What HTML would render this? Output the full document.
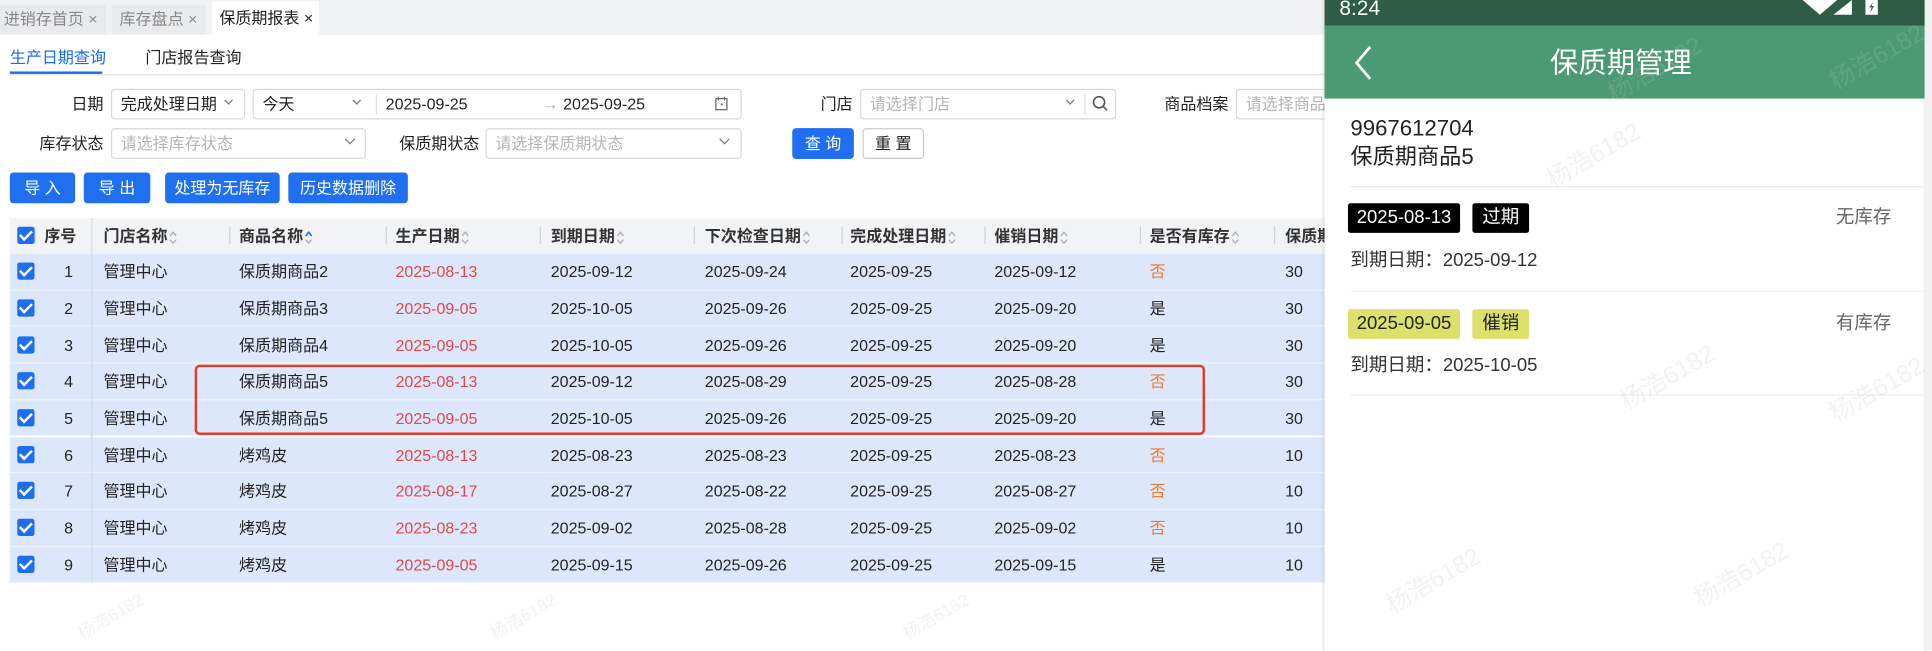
<!DOCTYPE html>
<html><head><meta charset="utf-8">
<style>
*{margin:0;padding:0;box-sizing:border-box}
html,body{width:1932px;height:651px;overflow:hidden;background:#fff}
#s{position:absolute;left:0;top:0;width:1568px;height:528px;transform:scale(1.23214);transform-origin:0 0;font-family:"Liberation Sans","Noto Sans CJK SC",sans-serif;font-size:13px;color:#222}
.a{position:absolute;white-space:nowrap;line-height:16px}
.box{position:absolute;border:1px solid #d9d9d9;border-radius:3px;background:#fff}
.ph{color:#b5b5b5}
.chev{position:absolute;width:7px;height:7px;border-right:1.3px solid #777;border-bottom:1.3px solid #777;transform:rotate(45deg)}
.btn{position:absolute;background:#1f6ff0;color:#fff;border-radius:3px;text-align:center;line-height:25px;height:25px}
.cb{position:absolute;width:14px;height:14px;background:#1e6ff0;border-radius:2px}
.cb:after{content:"";position:absolute;left:4px;top:1px;width:4px;height:8px;border-right:2px solid #fff;border-bottom:2px solid #fff;transform:rotate(45deg)}
.row{position:absolute;left:8px;width:1067px;height:29.7px;background:#dce7fb;border-bottom:1px solid #eef3fd}
.hs{position:absolute;top:184px;width:1px;height:14px;background:#d0d0d0}
.srt{display:inline-block;vertical-align:middle;margin-left:1px}
.red{color:#e0474a}.org{color:#f07c2a}
.wm{position:absolute;color:rgba(0,0,0,0.05);font-size:20px;transform:rotate(-30deg);white-space:nowrap}
</style></head><body><div id="s">
<div class="a" style="left:0;top:0;width:1075px;height:28px;background:#f0f1f3"></div>
<div class="a" style="left:0;top:4px;width:86px;height:24px;background:#e9eaec;color:#888;line-height:24px;padding-left:3px">进销存首页 ×</div>
<div class="a" style="left:91px;top:4px;width:76px;height:24px;background:#e9eaec;color:#888;line-height:24px;padding-left:6px">库存盘点 ×</div>
<div class="a" style="left:172px;top:1px;width:87px;height:27px;background:#fff;color:#222;line-height:27px;padding-left:6px">保质期报表 ×</div>
<div class="a" style="left:8px;top:39px;color:#1a6ee8">生产日期查询</div>
<div class="a" style="left:118px;top:39px;color:#222">门店报告查询</div>
<div class="a" style="left:8px;top:58px;width:75px;height:2px;background:#1a6ee8"></div>
<div class="a" style="left:8px;top:60px;width:1067px;height:1px;background:#e4e4e4"></div>
<div class="a" style="left:58px;top:77px">日期</div>
<div class="box" style="left:90px;top:72px;width:109px;height:25px"></div>
<div class="a" style="left:98px;top:77px">完成处理日期</div><div class="chev" style="left:183px;top:79px;width:5px;height:5px"></div>
<div class="box" style="left:205px;top:72px;width:397px;height:25px"></div>
<div class="a" style="left:213px;top:77px">今天</div><div class="chev" style="left:287px;top:79px;width:5px;height:5px"></div>
<div class="a" style="left:305px;top:77px;width:1px;height:16px;background:#ddd"></div>
<div class="a" style="left:313px;top:77px">2025-09-25</div>
<div class="a" style="left:440px;top:77px;color:#aaa">→</div>
<div class="a" style="left:457px;top:77px">2025-09-25</div>
<svg class="a" style="left:580px;top:78px" width="11" height="12" viewBox="0 0 11 12"><rect x="1" y="2" width="9" height="9" fill="none" stroke="#666"/><path d="M3 0.5v3M8 0.5v3" stroke="#666"/><rect x="5" y="6" width="1.5" height="1.5" fill="#666"/></svg>
<div class="a" style="left:666px;top:77px">门店</div>
<div class="box" style="left:698px;top:72px;width:208px;height:25px"></div>
<div class="a ph" style="left:706px;top:77px">请选择门店</div><div class="chev" style="left:866px;top:79px;width:5px;height:5px"></div>
<div class="a" style="left:880px;top:77px;width:1px;height:16px;background:#ddd"></div>
<svg class="a" style="left:886px;top:77px" width="14" height="14" viewBox="0 0 14 14"><circle cx="6" cy="6" r="4.5" fill="none" stroke="#555" stroke-width="1.3"/><path d="M9.5 9.5l3 3" stroke="#555" stroke-width="1.3"/></svg>
<div class="a" style="left:945px;top:77px">商品档案</div>
<div class="box" style="left:1003px;top:72px;width:90px;height:25px"></div>
<div class="a ph" style="left:1011px;top:77px">请选择商品</div>
<div class="a" style="left:32px;top:109px">库存状态</div>
<div class="box" style="left:90px;top:104px;width:207px;height:25px"></div>
<div class="a ph" style="left:98px;top:109px">请选择库存状态</div><div class="chev" style="left:281px;top:110px;width:6px;height:6px"></div>
<div class="a" style="left:324px;top:109px">保质期状态</div>
<div class="box" style="left:394px;top:104px;width:208px;height:25px"></div>
<div class="a ph" style="left:402px;top:109px">请选择保质期状态</div><div class="chev" style="left:585px;top:110px;width:6px;height:6px"></div>
<div class="btn" style="left:643px;top:104px;width:50px">查 询</div>
<div class="btn" style="left:700px;top:104px;width:50px;background:#fff;color:#222;border:1px solid #ccc;line-height:23px">重 置</div>
<div class="btn" style="left:8px;top:140px;width:53px">导 入</div>
<div class="btn" style="left:68px;top:140px;width:54px">导 出</div>
<div class="btn" style="left:134px;top:140px;width:93px">处理为无库存</div>
<div class="btn" style="left:234px;top:140px;width:97px">历史数据删除</div>
<div class="a" style="left:8px;top:177px;width:1067px;height:29px;background:#f2f3f5"></div>
<div class="cb" style="left:14px;top:184px"></div>
<div class="a" style="left:28px;top:184px;width:1px;height:14px;background:#d0d0d0"></div>
<div class="a" style="left:74px;top:177px;width:1px;height:296px;background:#d8dde8"></div>
<div class="hs" style="left:186px"></div><div class="hs" style="left:313px"></div><div class="hs" style="left:438px"></div><div class="hs" style="left:563px"></div><div class="hs" style="left:683px"></div><div class="hs" style="left:799px"></div><div class="hs" style="left:925px"></div><div class="hs" style="left:1034px"></div>
<div style="font-weight:bold;color:#333">
<div class="a" style="left:36px;top:184px">序号</div>
<div class="a" style="left:84px;top:184px">门店名称<svg class="srt" width="7" height="12"><path d="M1 4.5l2.5-3 2.5 3M1 7.5l2.5 3 2.5-3" fill="none" stroke="#aaa"/></svg></div>
<div class="a" style="left:194px;top:184px">商品名称<svg class="srt" width="7" height="12"><path d="M1 4.5l2.5-3 2.5 3" fill="none" stroke="#1a6ee8" stroke-width="1.3"/><path d="M1 7.5l2.5 3 2.5-3" fill="none" stroke="#aaa"/></svg></div>
<div class="a" style="left:321px;top:184px">生产日期<svg class="srt" width="7" height="12"><path d="M1 4.5l2.5-3 2.5 3M1 7.5l2.5 3 2.5-3" fill="none" stroke="#aaa"/></svg></div>
<div class="a" style="left:447px;top:184px">到期日期<svg class="srt" width="7" height="12"><path d="M1 4.5l2.5-3 2.5 3M1 7.5l2.5 3 2.5-3" fill="none" stroke="#aaa"/></svg></div>
<div class="a" style="left:572px;top:184px">下次检查日期<svg class="srt" width="7" height="12"><path d="M1 4.5l2.5-3 2.5 3M1 7.5l2.5 3 2.5-3" fill="none" stroke="#aaa"/></svg></div>
<div class="a" style="left:690px;top:184px">完成处理日期<svg class="srt" width="7" height="12"><path d="M1 4.5l2.5-3 2.5 3M1 7.5l2.5 3 2.5-3" fill="none" stroke="#aaa"/></svg></div>
<div class="a" style="left:807px;top:184px">催销日期<svg class="srt" width="7" height="12"><path d="M1 4.5l2.5-3 2.5 3M1 7.5l2.5 3 2.5-3" fill="none" stroke="#aaa"/></svg></div>
<div class="a" style="left:933px;top:184px">是否有库存<svg class="srt" width="7" height="12"><path d="M1 4.5l2.5-3 2.5 3M1 7.5l2.5 3 2.5-3" fill="none" stroke="#aaa"/></svg></div>
<div class="a" style="left:1043px;top:184px">保质期</div>
</div>
<div class="row" style="top:206.0px"></div><div class="row" style="top:235.7px"></div><div class="row" style="top:265.4px"></div><div class="row" style="top:295.1px"></div><div class="row" style="top:324.8px"></div><div class="row" style="top:354.5px"></div><div class="row" style="top:384.2px"></div><div class="row" style="top:413.9px"></div><div class="row" style="top:443.6px"></div>
<div class="a" style="left:74px;top:206px;width:1px;height:267px;background:#cfd8ea"></div>
<div style="position:absolute;left:0;top:0">
<div class="cb" style="left:14px;top:213px"></div><div class="a" style="left:52px;top:213px">1</div><div class="a" style="left:84px;top:213px">管理中心</div><div class="a" style="left:194px;top:213px">保质期商品2</div><div class="a red" style="left:321px;top:213px">2025-08-13</div><div class="a" style="left:447px;top:213px">2025-09-12</div><div class="a" style="left:572px;top:213px">2025-09-24</div><div class="a" style="left:690px;top:213px">2025-09-25</div><div class="a" style="left:807px;top:213px">2025-09-12</div><div class="a org" style="left:933px;top:213px">否</div><div class="a" style="left:1043px;top:213px">30</div>
<div class="cb" style="left:14px;top:243px"></div><div class="a" style="left:52px;top:243px">2</div><div class="a" style="left:84px;top:243px">管理中心</div><div class="a" style="left:194px;top:243px">保质期商品3</div><div class="a red" style="left:321px;top:243px">2025-09-05</div><div class="a" style="left:447px;top:243px">2025-10-05</div><div class="a" style="left:572px;top:243px">2025-09-26</div><div class="a" style="left:690px;top:243px">2025-09-25</div><div class="a" style="left:807px;top:243px">2025-09-20</div><div class="a" style="left:933px;top:243px">是</div><div class="a" style="left:1043px;top:243px">30</div>
<div class="cb" style="left:14px;top:273px"></div><div class="a" style="left:52px;top:273px">3</div><div class="a" style="left:84px;top:273px">管理中心</div><div class="a" style="left:194px;top:273px">保质期商品4</div><div class="a red" style="left:321px;top:273px">2025-09-05</div><div class="a" style="left:447px;top:273px">2025-10-05</div><div class="a" style="left:572px;top:273px">2025-09-26</div><div class="a" style="left:690px;top:273px">2025-09-25</div><div class="a" style="left:807px;top:273px">2025-09-20</div><div class="a" style="left:933px;top:273px">是</div><div class="a" style="left:1043px;top:273px">30</div>
<div class="cb" style="left:14px;top:302px"></div><div class="a" style="left:52px;top:302px">4</div><div class="a" style="left:84px;top:302px">管理中心</div><div class="a" style="left:194px;top:302px">保质期商品5</div><div class="a red" style="left:321px;top:302px">2025-08-13</div><div class="a" style="left:447px;top:302px">2025-09-12</div><div class="a" style="left:572px;top:302px">2025-08-29</div><div class="a" style="left:690px;top:302px">2025-09-25</div><div class="a" style="left:807px;top:302px">2025-08-28</div><div class="a org" style="left:933px;top:302px">否</div><div class="a" style="left:1043px;top:302px">30</div>
<div class="cb" style="left:14px;top:332px"></div><div class="a" style="left:52px;top:332px">5</div><div class="a" style="left:84px;top:332px">管理中心</div><div class="a" style="left:194px;top:332px">保质期商品5</div><div class="a red" style="left:321px;top:332px">2025-09-05</div><div class="a" style="left:447px;top:332px">2025-10-05</div><div class="a" style="left:572px;top:332px">2025-09-26</div><div class="a" style="left:690px;top:332px">2025-09-25</div><div class="a" style="left:807px;top:332px">2025-09-20</div><div class="a" style="left:933px;top:332px">是</div><div class="a" style="left:1043px;top:332px">30</div>
<div class="cb" style="left:14px;top:362px"></div><div class="a" style="left:52px;top:362px">6</div><div class="a" style="left:84px;top:362px">管理中心</div><div class="a" style="left:194px;top:362px">烤鸡皮</div><div class="a red" style="left:321px;top:362px">2025-08-13</div><div class="a" style="left:447px;top:362px">2025-08-23</div><div class="a" style="left:572px;top:362px">2025-08-23</div><div class="a" style="left:690px;top:362px">2025-09-25</div><div class="a" style="left:807px;top:362px">2025-08-23</div><div class="a org" style="left:933px;top:362px">否</div><div class="a" style="left:1043px;top:362px">10</div>
<div class="cb" style="left:14px;top:391px"></div><div class="a" style="left:52px;top:391px">7</div><div class="a" style="left:84px;top:391px">管理中心</div><div class="a" style="left:194px;top:391px">烤鸡皮</div><div class="a red" style="left:321px;top:391px">2025-08-17</div><div class="a" style="left:447px;top:391px">2025-08-27</div><div class="a" style="left:572px;top:391px">2025-08-22</div><div class="a" style="left:690px;top:391px">2025-09-25</div><div class="a" style="left:807px;top:391px">2025-08-27</div><div class="a org" style="left:933px;top:391px">否</div><div class="a" style="left:1043px;top:391px">10</div>
<div class="cb" style="left:14px;top:421px"></div><div class="a" style="left:52px;top:421px">8</div><div class="a" style="left:84px;top:421px">管理中心</div><div class="a" style="left:194px;top:421px">烤鸡皮</div><div class="a red" style="left:321px;top:421px">2025-08-23</div><div class="a" style="left:447px;top:421px">2025-09-02</div><div class="a" style="left:572px;top:421px">2025-08-28</div><div class="a" style="left:690px;top:421px">2025-09-25</div><div class="a" style="left:807px;top:421px">2025-09-02</div><div class="a org" style="left:933px;top:421px">否</div><div class="a" style="left:1043px;top:421px">10</div>
<div class="cb" style="left:14px;top:451px"></div><div class="a" style="left:52px;top:451px">9</div><div class="a" style="left:84px;top:451px">管理中心</div><div class="a" style="left:194px;top:451px">烤鸡皮</div><div class="a red" style="left:321px;top:451px">2025-09-05</div><div class="a" style="left:447px;top:451px">2025-09-15</div><div class="a" style="left:572px;top:451px">2025-09-26</div><div class="a" style="left:690px;top:451px">2025-09-25</div><div class="a" style="left:807px;top:451px">2025-09-15</div><div class="a" style="left:933px;top:451px">是</div><div class="a" style="left:1043px;top:451px">10</div>
</div>
<div class="a" style="left:158px;top:296px;width:820px;height:57px;border:2.5px solid #e33b26;border-radius:4px"></div>
<div class="wm" style="left:60px;top:490px;font-size:14px">杨浩6182</div>
<div class="wm" style="left:395px;top:490px;font-size:14px">杨浩6182</div>
<div class="wm" style="left:730px;top:490px;font-size:14px">杨浩6182</div>
<div class="a" style="left:1072px;top:0;width:4px;height:528px;background:linear-gradient(90deg,rgba(0,0,0,0),rgba(0,0,0,0.12))"></div>
<div class="a" style="left:1075px;top:0;width:487px;height:528px;background:#fff"></div>
<div class="a" style="left:1561px;top:0;width:7px;height:528px;background:#f2f2f2"></div>
<div class="a" style="left:1075px;top:0;width:487px;height:21px;background:#2e5c45"></div>
<div class="a" style="left:1087px;top:-2px;color:#fff;font-size:17px;line-height:18px">8:24</div>
<svg class="a" style="left:1463px;top:0" width="64" height="14"><path d="M0 0h28l-14 12z" fill="#fff"/><path d="M25 12L40 0v12z" fill="#fff"/><rect x="51" y="0" width="10" height="12" fill="#fff"/><path d="M57 2l-3 4h2l-1 4 3-5h-2z" fill="#2e5c45"/></svg>
<div class="a" style="left:1075px;top:21px;width:487px;height:59px;background:#4c9a73"></div>
<svg class="a" style="left:1097px;top:36px" width="18" height="30"><path d="M15 2L4 15l11 13" fill="none" stroke="#fff" stroke-width="2.2"/></svg>
<div class="a" style="left:1258px;top:37px;color:#fff;font-size:23px;line-height:28px">保质期管理</div>
<div class="a" style="left:1096px;top:93px;font-size:18px;color:#222;line-height:23px">9967612704<br>保质期商品5</div>
<div class="a" style="left:1096px;top:151px;width:465px;height:1px;background:#eee"></div>
<div class="a" style="left:1094px;top:165px;width:91px;height:24px;background:#000;color:#fff;font-size:15px;line-height:24px;text-align:center;border-radius:2px">2025-08-13</div>
<div class="a" style="left:1195px;top:165px;width:46px;height:24px;background:#000;color:#fff;font-size:15px;line-height:24px;text-align:center;border-radius:2px">过期</div>
<div class="a" style="left:1490px;top:169px;font-size:15px;color:#666">无库存</div>
<div class="a" style="left:1096px;top:204px;font-size:15px;color:#333">到期日期：2025-09-12</div>
<div class="a" style="left:1096px;top:236px;width:465px;height:1px;background:#f4f4f4"></div>
<div class="a" style="left:1094px;top:251px;width:91px;height:24px;background:#dde06a;color:#222;font-size:15px;line-height:24px;text-align:center;border-radius:2px">2025-09-05</div>
<div class="a" style="left:1195px;top:251px;width:46px;height:24px;background:#dde06a;color:#222;font-size:15px;line-height:24px;text-align:center;border-radius:2px">催销</div>
<div class="a" style="left:1490px;top:255px;font-size:15px;color:#666">有库存</div>
<div class="a" style="left:1096px;top:289px;font-size:15px;color:#333">到期日期：2025-10-05</div>
<div class="a" style="left:1096px;top:320px;width:465px;height:1px;background:#eee"></div>
<div class="wm" style="left:1250px;top:110px">杨浩6182</div>
<div class="wm" style="left:1310px;top:290px">杨浩6182</div>
<div class="wm" style="left:1480px;top:300px">杨浩6182</div>
<div class="wm" style="left:1120px;top:455px">杨浩6182</div>
<div class="wm" style="left:1370px;top:450px">杨浩6182</div>
<div class="wm" style="left:1480px;top:30px;color:rgba(255,255,255,0.1)">杨浩6182</div>
<div class="wm" style="left:1300px;top:40px;color:rgba(255,255,255,0.1)">杨浩6182</div>
</div></body></html>
